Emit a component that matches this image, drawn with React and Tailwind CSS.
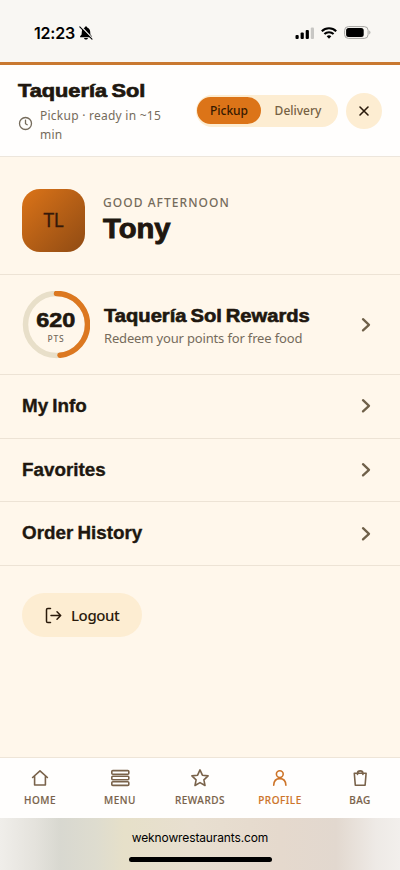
import clsx from 'clsx'

const ROWS = ['My Info', 'Favorites', 'Order History']

const NAV = [
  { label: 'HOME', icon: HomeIcon },
  { label: 'MENU', icon: MenuIcon },
  { label: 'REWARDS', icon: StarIcon },
  { label: 'PROFILE', icon: ProfileIcon, active: true },
  { label: 'BAG', icon: BagIcon },
]

const stroke = {
  fill: 'none',
  stroke: 'currentColor',
  strokeLinecap: 'round',
  strokeLinejoin: 'round',
}

// wide, heavy display face
const display = "origin-left whitespace-nowrap font-['Liberation_Sans',sans-serif] font-bold"

function HomeIcon() {
  return (
    <svg width="20" height="20" viewBox="0 0 20 20" strokeWidth="1.6" {...stroke}>
      <path d="M2.6 9.5 10 2.8l7.4 6.7M4.6 8.2V17h10.8V8.2" />
    </svg>
  )
}

function MenuIcon() {
  return (
    <svg width="20" height="20" viewBox="0 0 20 20" strokeWidth="1.6" {...stroke}>
      <rect x="1.8" y="2.6" width="17" height="3.6" rx="1" />
      <rect x="1.8" y="8.2" width="17" height="3.6" rx="1" />
      <rect x="1.8" y="13.8" width="17" height="3.6" rx="1" />
    </svg>
  )
}

function StarIcon() {
  return (
    <svg width="20" height="20" viewBox="0 0 20 20" strokeWidth="1.6" {...stroke}>
      <path d="m10 1.9 2.4 5.3 5.7.7-4.2 3.9 1.1 5.7-5-2.9-5 2.9 1.1-5.7-4.2-3.9 5.7-.7z" />
    </svg>
  )
}

function ProfileIcon() {
  return (
    <svg width="20" height="20" viewBox="0 0 20 20" strokeWidth="1.6" {...stroke}>
      <circle cx="9.8" cy="6.1" r="3.4" />
      <path d="M3.7 17.2c.2-4.5 2.8-6.6 6.1-6.6s5.9 2.1 6.1 6.6" />
    </svg>
  )
}

function BagIcon() {
  return (
    <svg width="20" height="20" viewBox="0 0 20 20" strokeWidth="1.6" {...stroke}>
      <path d="M4.3 5.3h11.8l-1 12H5.3zM7.5 6.500V5.300c0-3.200 5.400-3.200 5.400 0v1.200" />
    </svg>
  )
}

function Chevron() {
  return (
    <svg className="shrink-0 text-[#6f6049]" width="10" height="16" viewBox="0 0 10 16" strokeWidth="2.3" {...stroke}>
      <path d="m2 2.2 6 5.600-6 5.600" />
    </svg>
  )
}

function StatusBar() {
  return (
    <div className="flex h-[62px] items-center justify-between bg-[#f9f7f3] pl-[34px] pr-[29px] pt-[3px] text-black">
      <div className="flex items-center gap-[4px]">
        <span className="font-['Inter',sans-serif] text-[16px] font-semibold tracking-[-0.2px]">12:23</span>
        <svg width="14" height="14" viewBox="0 0 14 14">
          <path fill="currentColor" d="M7 .6c.8 0 1.300.5 1.400 1.100 1.700.6 2.700 2 2.800 4l.2 2.700 1.500 1.900v.9H1.100v-.9l1.500-1.900.2-2.700c.1-2 1.100-3.400 2.800-4C5.700 1.100 6.200.6 7 .6M5 12h4c-.3 1-1.100 1.500-2 1.500S5.300 13 5 12" />
          <path d="M2 .5 14 13" stroke="#f9f7f3" strokeWidth="1.5" />
          <path d="M.8.8 13 13.2" stroke="currentColor" strokeWidth="1.1" strokeLinecap="round" />
        </svg>
      </div>
      <div className="flex items-center gap-[7px]">
        <svg width="19" height="12" viewBox="0 0 19 12">
          <rect x="0.5" y="8" width="3.2" height="4" rx="1" />
          <rect x="5.6" y="5.5" width="3.2" height="6.5" rx="1" />
          <rect x="10.7" y="3" width="3.2" height="9" rx="1" />
          <rect x="15.8" y="0.5" width="3.2" height="11.5" rx="1" fill="#c8c7c4" />
        </svg>
        <svg width="16" height="12" viewBox="0 0 16 12" fill="none" stroke="currentColor" strokeWidth="2.1">
          <path d="M.8 4.2c4-3.9 10.4-3.9 14.4 0M3.4 7.1c2.600-2.500 6.600-2.500 9.200 0" />
          <path d="M5.7 9.2c1.300-1.200 3.300-1.200 4.600 0L8 11.700z" fill="currentColor" stroke="none" />
        </svg>
        <svg width="27" height="13" viewBox="0 0 27 13">
          <rect x=".6" y=".6" width="23.5" height="11.8" rx="3.8" fill="none" stroke="#a5a4a1" />
          <rect x="2.1" y="2.1" width="17.6" height="8.8" rx="2.5" />
          <path d="M25.3 4.600c1.500.7 1.500 3.100 0 3.800z" fill="#a5a4a1" />
        </svg>
      </div>
    </div>
  )
}

function Header() {
  return (
    <header className="flex h-[95px] items-center border-b border-t-[3px] border-b-[#ede6dc] border-t-[#c97830] bg-[#fffefd] px-[18px]">
      <div className="w-[178px] pt-[2px]">
        <h1 className={clsx(display, 'mb-[2px] scale-x-[1.145] text-[19px] leading-[22px] [word-spacing:-1.5px] [-webkit-text-stroke:0.7px_#20170f]')}>Taquería Sol</h1>
        <div className="flex items-center gap-[7px] text-[#756b5b]">
          <svg width="15" height="15" viewBox="0 0 15 15" strokeWidth="1.3" {...stroke}>
            <circle cx="7.5" cy="7.5" r="6" />
            <path d="M7.5 4.2v3.500l1.700 1" />
          </svg>
          <p className="whitespace-nowrap pt-[2px] text-[12px] leading-[19px] tracking-[0.25px]">Pickup · ready in ~15<br />min</p>
        </div>
      </div>
      <div className="flex h-8 w-[142px] items-center rounded-full bg-[#fdedd2] pl-[1px] text-[12px] font-medium">
        <span className="flex h-[27px] w-[64px] items-center justify-center rounded-full bg-[#dc7418] text-[#361900]">Pickup</span>
        <span className="flex-1 pr-[3px] text-center text-[#766143]">Delivery</span>
      </div>
      <button className="ml-2 flex size-9 items-center justify-center rounded-full bg-[#fdedd2] text-[#2a1a0b]">
        <svg width="12" height="12" viewBox="0 0 12 12" strokeWidth="1.6" {...stroke}>
          <path d="m2 2 8 8m0-8-8 8" />
        </svg>
      </button>
    </header>
  )
}

function PointsRing() {
  return (
    <div className="relative size-[68px] shrink-0">
      <svg width="68" height="68" viewBox="0 0 68 68" fill="none" strokeWidth="5.5">
        <circle cx="34.5" cy="33.5" r="31" stroke="#e8dfc9" />
        <path d="M34.5 2.5a31 31 0 0 1 3.500 61.800" stroke="#dc7820" strokeLinecap="round" />
      </svg>
      <div className="absolute inset-0 flex flex-col items-center pt-[17px]">
        <span className="scale-x-[1.17] font-['Liberation_Sans',sans-serif] text-[20px] font-bold leading-[24px] [-webkit-text-stroke:0.6px_#20170f]">620</span>
        <span className="mt-[1px] text-[8.5px] font-medium leading-[12px] tracking-[0.8px] text-[#756b5b]">PTS</span>
      </div>
    </div>
  )
}

export default function App() {
  return (
    <div className="flex h-[870px] w-[400px] flex-col overflow-hidden bg-[#fff7eb] font-['Noto_Sans',sans-serif] text-[#20170f]">
      <StatusBar />
      <Header />

      <main className="flex-1">
        <section className="flex h-[118px] items-center border-b border-[#ede3d5] pl-[22px] pt-[9px]">
          <div className="flex size-[63px] items-center justify-center rounded-[18px] bg-linear-to-br from-[#dc7418] to-[#904b13] text-[19px] tracking-[-0.3px] text-[#35190a] [-webkit-text-stroke:0.3px_#35190a]">TL</div>
          <div className="ml-[18px]">
            <p className="text-[12px] font-medium leading-[18px] tracking-[1.05px] text-[#756b5b]">GOOD AFTERNOON</p>
            <h2 className={clsx(display, 'scale-x-[1.08] text-[27px] leading-[34px] [-webkit-text-stroke:0.9px_#20170f]')}>Tony</h2>
          </div>
        </section>

        <section className="flex h-[100px] items-center border-b border-[#ede3d5] pl-[22px] pr-[29px]">
          <PointsRing />
          <div className="ml-[14px] mt-[4px] flex-1">
            <h3 className={clsx(display, 'scale-x-[1.12] text-[18px] leading-[22px] [word-spacing:-1.5px] [-webkit-text-stroke:0.6px_#20170f]')}>Taquería Sol Rewards</h3>
            <p className="whitespace-nowrap text-[13px] leading-[22px] tracking-[-0.16px] text-[#756b5b]">Redeem your points for free food</p>
          </div>
          <Chevron />
        </section>

        {ROWS.map((label) => (
          <div key={label} className="flex h-[63.7px] items-center justify-between border-b border-[#ede3d5] pl-[22px] pr-[29px]">
            <span className={clsx(display, 'scale-x-[1.045] text-[18px] [word-spacing:-1px] [-webkit-text-stroke:0.35px_#20170f]')}>{label}</span>
            <Chevron />
          </div>
        ))}

        <button className="ml-[22px] mt-[27px] flex h-11 w-[120px] items-center rounded-full bg-[#fdedd2] pl-[23px] text-[15px] font-medium text-[#2a1a0b]">
          <svg width="17" height="17" viewBox="0 0 17 17" strokeWidth="1.5" {...stroke}>
            <path d="M5.5 1.5H2.800a1.300 1.300 0 0 0-1.300 1.300v11.400a1.300 1.300 0 0 0 1.300 1.300h2.700M6 8.500h9.500M12 4.800l3.700 3.700-3.700 3.700" />
          </svg>
          <span className="ml-[9px] tracking-[-0.4px]">Logout</span>
        </button>
      </main>

      <nav className="grid h-[61px] grid-cols-5 border-t border-[#eee5d8] bg-[#fffefd]">
        {NAV.map(({ label, icon: Icon, active }) => (
          <div key={label} className={clsx('flex flex-col items-center pt-[10px]', active ? 'text-[#cd7429]' : 'text-[#79624a]')}>
            <Icon />
            <span className="mt-[4px] text-[10px] font-medium leading-4 tracking-[0.5px] [-webkit-text-stroke:0.15px_currentColor]">{label}</span>
          </div>
        ))}
      </nav>

      <footer className="flex h-[52px] flex-col items-center bg-[linear-gradient(90deg,#f0eeea_0%,#e4e2dc_9%,#d8d8d0_15%,#dedccf_24%,#e6e0c9_31%,#e8dfd0_48%,#e5d9cd_70%,#e2d8cf_84%,#eeeae6_94%,#f2efec_100%)] pt-[10px]">
        <span className="font-['Inter',sans-serif] text-[12px] leading-[20px] tracking-[-0.12px] text-black">weknowrestaurants.com</span>
        <div className="mt-[9px] h-[5px] w-[143px] rounded-full bg-black" />
      </footer>
    </div>
  )
}
